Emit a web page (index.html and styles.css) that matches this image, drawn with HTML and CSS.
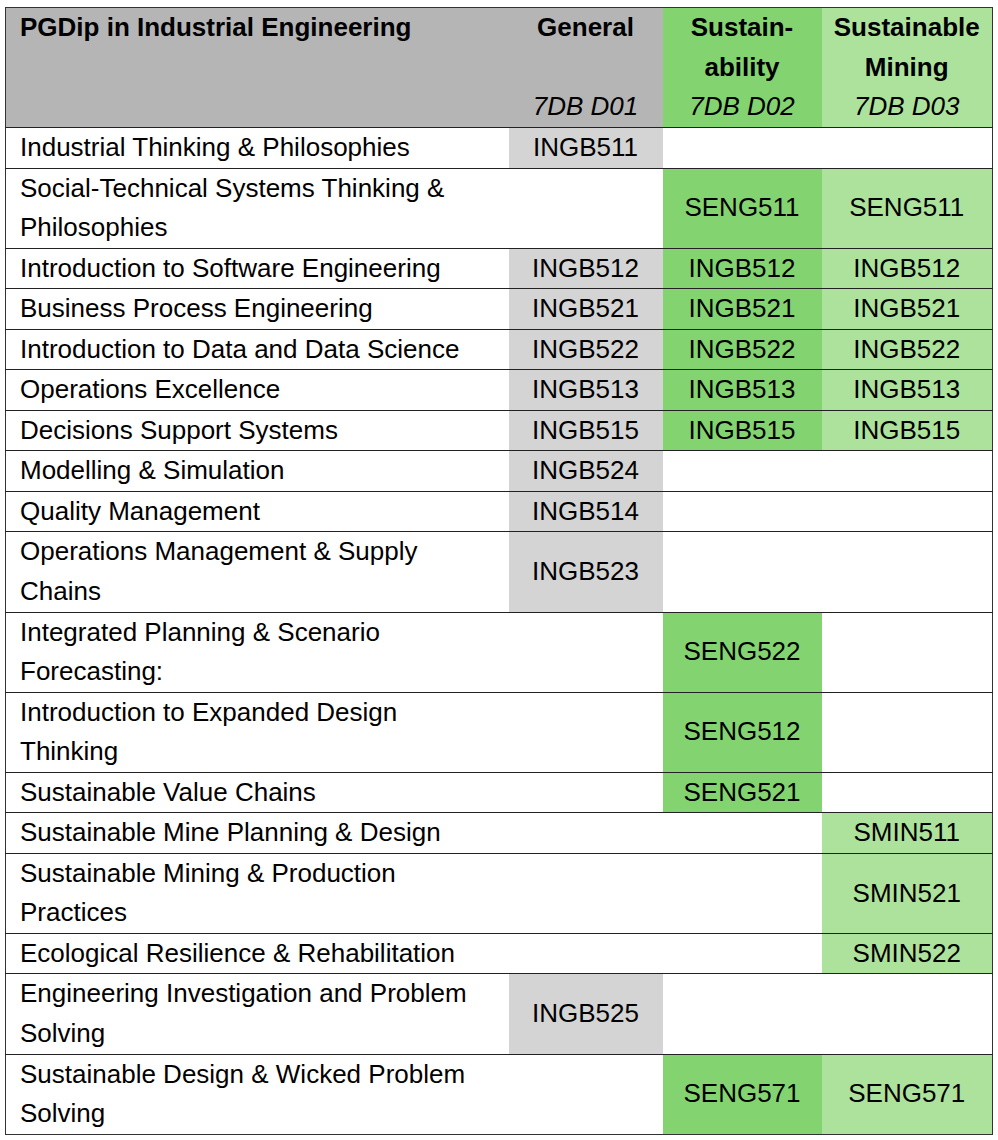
FILE: index.html
```html
<!DOCTYPE html>
<html lang="en">
<head>
<meta charset="utf-8">
<title>PGDip in Industrial Engineering</title>
<link rel="stylesheet" href="styles.css">
</head>
<body>
<table class="prog">
  <colgroup>
    <col class="c-name">
    <col class="c-gen">
    <col class="c-sus">
    <col class="c-min">
  </colgroup>
  <thead>
    <tr>
      <th class="h-name"><div class="hbox">PGDip in Industrial Engineering</div></th>
      <th class="h-gen"><div class="hbox"><span class="ht">General</span><span class="hc">7DB D01</span></div></th>
      <th class="h-sus"><div class="hbox"><span class="ht">Sustain-<br>ability</span><span class="hc">7DB D02</span></div></th>
      <th class="h-min"><div class="hbox"><span class="ht">Sustainable<br>Mining</span><span class="hc">7DB D03</span></div></th>
    </tr>
  </thead>
  <tbody>
    <tr><td>Industrial Thinking &amp; Philosophies</td><td class="gen">INGB511</td><td></td><td></td></tr>
    <tr><td>Social-Technical Systems Thinking &amp; Philosophies</td><td></td><td class="sus">SENG511</td><td class="min">SENG511</td></tr>
    <tr><td>Introduction to Software Engineering</td><td class="gen">INGB512</td><td class="sus">INGB512</td><td class="min">INGB512</td></tr>
    <tr><td>Business Process Engineering</td><td class="gen">INGB521</td><td class="sus">INGB521</td><td class="min">INGB521</td></tr>
    <tr><td>Introduction to Data and Data Science</td><td class="gen">INGB522</td><td class="sus">INGB522</td><td class="min">INGB522</td></tr>
    <tr><td>Operations Excellence</td><td class="gen">INGB513</td><td class="sus">INGB513</td><td class="min">INGB513</td></tr>
    <tr><td>Decisions Support Systems</td><td class="gen">INGB515</td><td class="sus">INGB515</td><td class="min">INGB515</td></tr>
    <tr><td>Modelling &amp; Simulation</td><td class="gen">INGB524</td><td></td><td></td></tr>
    <tr><td>Quality Management</td><td class="gen">INGB514</td><td></td><td></td></tr>
    <tr><td>Operations Management &amp; Supply Chains</td><td class="gen">INGB523</td><td></td><td></td></tr>
    <tr><td>Integrated Planning &amp; Scenario Forecasting:</td><td></td><td class="sus">SENG522</td><td></td></tr>
    <tr><td>Introduction to Expanded Design Thinking</td><td></td><td class="sus">SENG512</td><td></td></tr>
    <tr><td>Sustainable Value Chains</td><td></td><td class="sus">SENG521</td><td></td></tr>
    <tr><td>Sustainable Mine Planning &amp; Design</td><td></td><td></td><td class="min">SMIN511</td></tr>
    <tr><td>Sustainable Mining &amp; Production Practices</td><td></td><td></td><td class="min">SMIN521</td></tr>
    <tr><td>Ecological Resilience &amp; Rehabilitation</td><td></td><td></td><td class="min">SMIN522</td></tr>
    <tr><td>Engineering Investigation and Problem Solving</td><td class="gen">INGB525</td><td></td><td></td></tr>
    <tr><td>Sustainable Design &amp; Wicked Problem Solving</td><td></td><td class="sus">SENG571</td><td class="min">SENG571</td></tr>
  </tbody>
</table>
</body>
</html>
```
FILE: styles.css
```css
html, body {
  margin: 0;
  padding: 0;
  background: #ffffff;
}

body {
  font-family: "Liberation Sans", Arial, Helvetica, sans-serif;
  font-size: 26px;
  color: #000;
  padding: 7px 0 0 5px;
}

.prog {
  border-collapse: collapse;
  width: 987px;
  table-layout: fixed;
  border: 1.5px solid #333;
}

.c-name { width: 503px; }
.c-gen { width: 154px; }
.c-sus { width: 159px; }
.c-min { width: 171px; }

.prog th,
.prog td {
  padding: 0;
  line-height: 39.55px;
  vertical-align: middle;
}

.prog tbody tr {
  border-top: 1.5px solid #222;
}

.prog thead th {
  background: #b5b5b5;
  vertical-align: top;
  font-weight: bold;
  text-align: center;
}

.prog thead th.h-sus { background: #83d470; }
.prog thead th.h-min { background: #ade29c; }

.hbox {
  height: 119px;
  display: flex;
  flex-direction: column;
  justify-content: space-between;
}

.h-name .hbox {
  text-align: left;
  padding-left: 14px;
}

.hc {
  font-style: italic;
  font-weight: normal;
}

.prog tbody td:first-child {
  padding: 0 12px 0 14px;
}

.prog tbody td:not(:first-child) {
  text-align: center;
}

.gen { background: #d4d4d4; }
.sus { background: #83d470; }
.min { background: #ade29c; }
```
